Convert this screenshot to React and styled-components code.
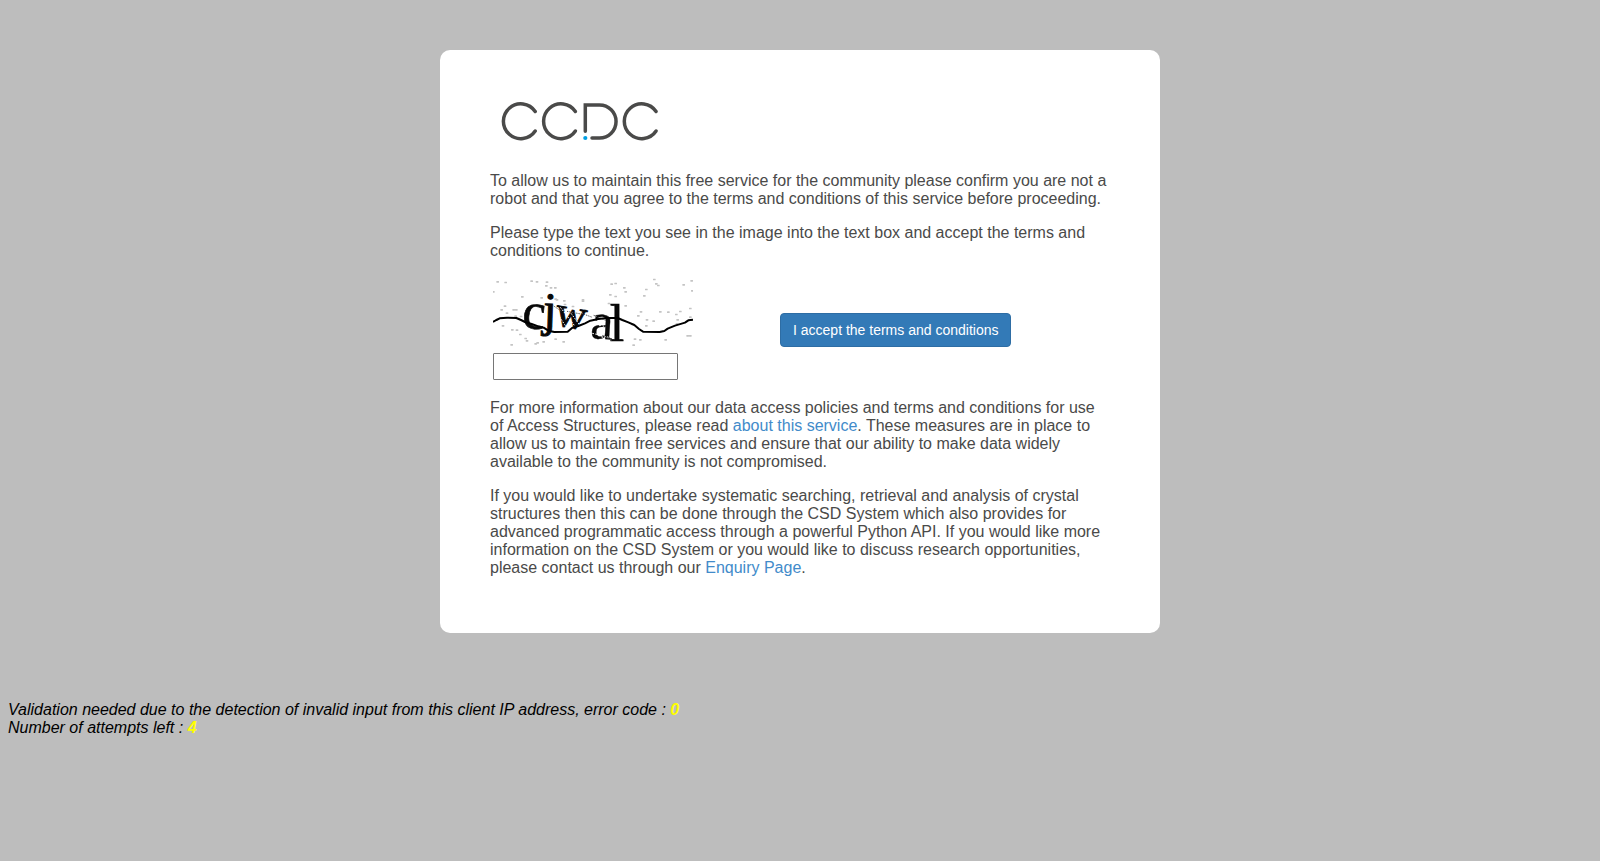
import React from "react";
import styled, { createGlobalStyle } from "styled-components";

const GlobalStyle = createGlobalStyle`
  body {
    margin: 0;
    background: #bdbdbd;
    color: #000;
    font: 16px/18px "Liberation Sans", Arial, sans-serif;
  }
`;

const Card = styled.main`
  box-sizing: border-box;
  width: 45%;
  min-width: 720px;
  margin: 50px auto 0;
  padding: 50px 50px 40px;
  border-radius: 10px;
  background: #fff;
  color: #4a4a49;
`;

const Logo = styled.svg`
  display: block;
  width: 180px;
  height: 56px;
`;

const Paragraph = styled.p`
  margin: 16px 0;
`;

const Link = styled.a`
  color: #428bca;
  text-decoration: none;
`;

const Challenge = styled.form`
  display: grid;
  grid-template-columns: 287px auto;
  align-items: center;
  justify-content: start;
  padding: 1px 3px;
`;

const Answer = styled.div`
  display: flex;
  flex-direction: column;
  align-items: flex-start;
  gap: 6px;
  padding-bottom: 2px;
`;

const Picture = styled.svg`
  display: block;
  width: 200px;
  height: 70px;
`;

const TextBox = styled.input`
  box-sizing: border-box;
  width: 185px;
  height: 27px;
  margin: 0;
  padding: 2px 4px;
  border: 1px solid #767676;
  border-radius: 1px;
  background: #fff;
  font: inherit;
`;

const AcceptButton = styled.button`
  padding: 6px 12px;
  border: 1px solid #2e6da4;
  border-radius: 4px;
  background: #337ab7;
  color: #fff;
  font: 14px/20px "Liberation Sans", Arial, sans-serif;
  white-space: nowrap;
  cursor: pointer;
`;

const Status = styled.footer`
  margin: 68px 8px 0;
  font-style: italic;
`;

const Line = styled.div``;

const Value = styled.b`
  color: #ff0;
`;

const specks = [
  [38, 36], [62, 38], [140, 34], [156, 36], [186, 37], [184, 48], [198, 54], [211, 54],
  [112, 81], [170, 84], [216, 90], [238, 93], [240, 104], [212, 88], [380, 43], [392, 41],
  [418, 54], [422, 66], [376, 75], [392, 80], [372, 101], [422, 108], [508, 29], [514, 42],
  [520, 47], [484, 59], [478, 78], [596, 45], [620, 33], [622, 63], [25, 66], [50, 120],
  [60, 109], [66, 130], [86, 120], [94, 120], [92, 139], [108, 140], [122, 136], [54, 168],
  [34, 150], [82, 180], [96, 181], [106, 194], [80, 225], [122, 206], [126, 213], [152, 222],
  [158, 219], [176, 216], [212, 208], [236, 216], [218, 108], [264, 110], [300, 120],
  [468, 126], [460, 138], [486, 150], [506, 154], [526, 126], [550, 127], [586, 125],
  [574, 134], [578, 150], [576, 162], [484, 168], [442, 164], [466, 210], [542, 210],
  [446, 226], [450, 208], [608, 198], [616, 198], [616, 116], [616, 142], [294, 90], [294, 94],
];

const letters = [
  { ch: "c", x: 109, y: 172, size: 154, turn: 6, edge: 2 },
  { ch: "j", x: 173, y: 167, size: 144, turn: 2, edge: 3 },
  { ch: "w", x: 207, y: 164, size: 128, turn: 10, edge: 3 },
  { ch: "a", x: 314, y: 204, size: 154, turn: 4, edge: 1 },
  { ch: "l", x: 374, y: 214, size: 156, turn: 0, edge: 2 },
];

export default function App() {
  return (
    <>
      <GlobalStyle />
      <Card>
        <Logo viewBox="0 0 180 56" role="img" aria-label="CCDC">
          <g fill="none" stroke="#4a4a49" strokeWidth="3.5" strokeLinecap="round">
            <path d="M45.2 11.5A17.4 17.4 0 1 0 45.2 31" />
            <path d="M85.4 11.5A17.4 17.4 0 1 0 85.4 31" />
            <path d="M95.3 31.2V5H109.5A16.5 16.5 0 0 1 109.5 38.1H102" />
            <path d="M166.1 11.5A17.4 17.4 0 1 0 166.1 31" />
          </g>
          <circle cx="95.3" cy="38" r="2.1" fill="#009fe3" />
        </Logo>
        <Paragraph>
          To allow us to maintain this free service for the community please confirm you are not a
          robot and that you agree to the terms and conditions of this service before proceeding.
        </Paragraph>
        <Paragraph>
          Please type the text you see in the image into the text box and accept the terms and
          conditions to continue.
        </Paragraph>
        <Challenge onSubmit={(e) => e.preventDefault()}>
          <Answer>
            <Picture viewBox="24 21 600 210" role="img" aria-label="Verification image">
              <g fill="#c4c4c4">
                {specks.map(([x, y], i) => (
                  <rect key={i} x={x - 4} y={y - 3} width="8" height="5" rx="1" />
                ))}
              </g>
              <g fontFamily="Liberation Serif, serif" fill="#080808" stroke="#080808">
                {letters.map((l) => (
                  <text
                    key={l.ch}
                    x={l.x}
                    y={l.y}
                    fontSize={l.size}
                    strokeWidth={l.edge}
                    transform={`rotate(${l.turn} ${l.x} ${l.y})`}
                  >
                    {l.ch}
                  </text>
                ))}
              </g>
              <path
                fill="none"
                stroke="#fff"
                strokeWidth="3"
                strokeDasharray="5 4"
                d="M208 118L246 174M226 112L268 166M258 130L288 170M318 158L362 170M322 190L380 204M340 146L352 204"
              />
              <path
                fill="none"
                stroke="#555"
                strokeWidth="3"
                strokeDasharray="4 3"
                d="M206 108L230 124M246 124L288 132M290 130L322 142M326 136L364 152M352 196L382 212"
              />
              <path
                fill="none"
                stroke="#000"
                strokeWidth="6"
                strokeLinejoin="round"
                d="M24 156L34 150L44 145L66 143L94 144L108 150L120 156L140 162L160 169L176 173L190 182L208 186L248 185L262 173L280 168L300 160L316 152L340 147L366 144L398 144L412 150L430 157L448 165L462 177L474 185L524 186L538 183L548 176L570 167L600 158L610 151L624 149"
              />
            </Picture>
            <TextBox type="text" aria-label="Text in the image" />
          </Answer>
          <AcceptButton type="submit">I accept the terms and conditions</AcceptButton>
        </Challenge>
        <Paragraph>
          For more information about our data access policies and terms and conditions for use of
          Access Structures, please read <Link href="#about">about this service</Link>. These
          measures are in place to allow us to maintain free services and ensure that our ability to
          make data widely available to the community is not compromised.
        </Paragraph>
        <Paragraph>
          If you would like to undertake systematic searching, retrieval and analysis of crystal
          structures then this can be done through the CSD System which also provides for advanced
          programmatic access through a powerful Python API. If you would like more information on
          the CSD System or you would like to discuss research opportunities, please contact us
          through our <Link href="#enquiry">Enquiry Page</Link>.
        </Paragraph>
      </Card>
      <Status>
        <Line>
          Validation needed due to the detection of invalid input from this client IP address, error
          code : <Value>0</Value>
        </Line>
        <Line>
          Number of attempts left : <Value>4</Value>
        </Line>
      </Status>
    </>
  );
}
